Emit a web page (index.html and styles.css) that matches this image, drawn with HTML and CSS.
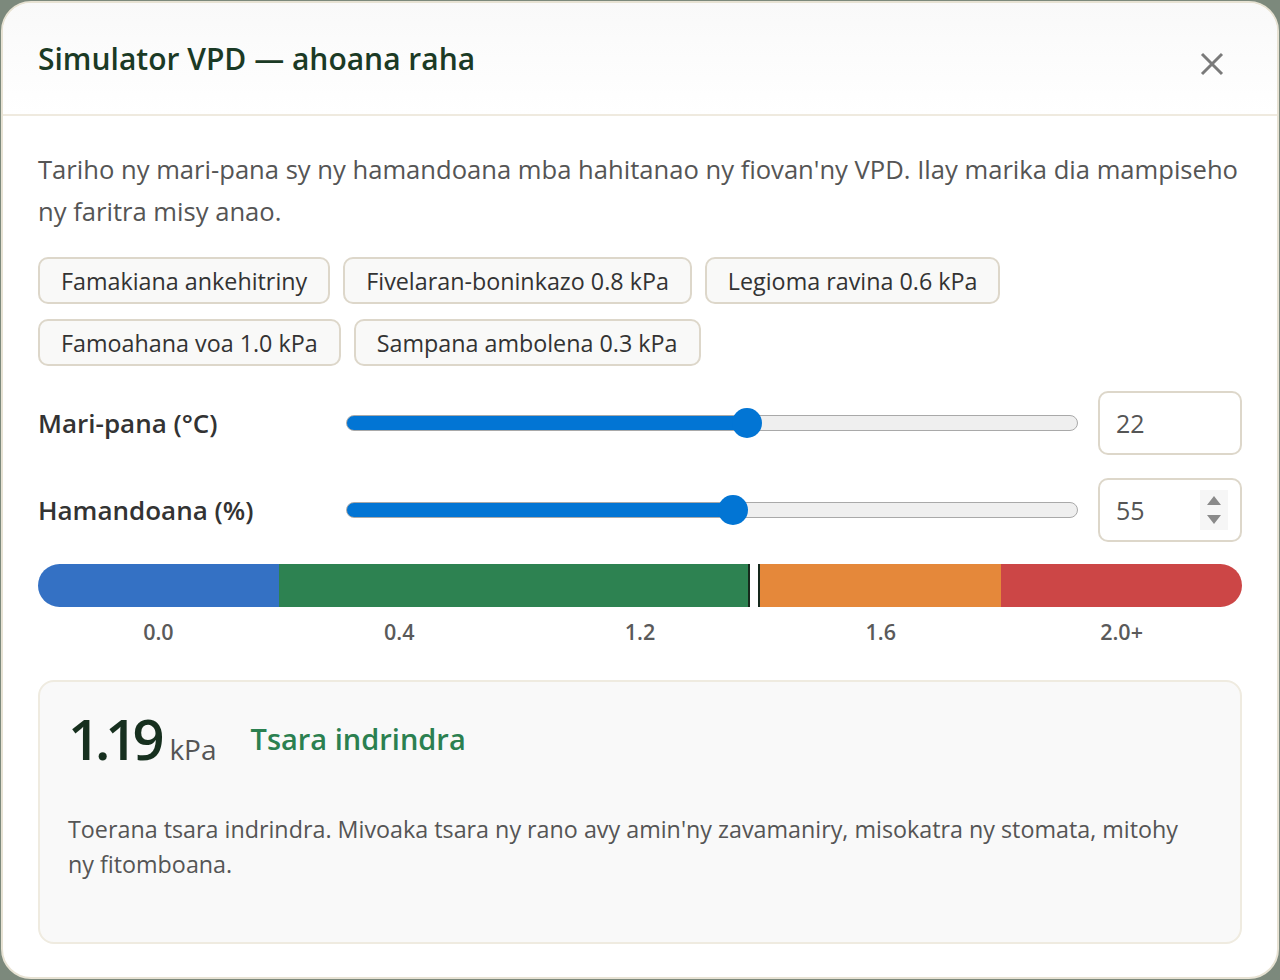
FILE: index.html
```html
<!DOCTYPE html>
<html lang="mg">
<head>
    <meta charset="UTF-8">
    <meta name="viewport" content="width=device-width, initial-scale=1.0">
    <title>Simulator VPD</title>
    <link rel="stylesheet" href="styles.css">
</head>
<body>
    <div class="modal">
        <header class="modal-header">
            <h1>Simulator VPD — ahoana raha</h1>
            <button class="close" aria-label="Hidio">
                <svg width="26" height="26" viewBox="0 0 26 26"><path d="M3 3 L23 23 M23 3 L3 23" stroke="#7a7a7a" stroke-width="3" fill="none"/></svg>
            </button>
        </header>
        <div class="modal-body">
            <p class="intro">Tariho ny mari-pana sy ny hamandoana mba hahitanao ny fiovan'ny VPD. Ilay marika dia mampiseho ny faritra misy anao.</p>

            <div class="chips">
                <button class="chip">Famakiana ankehitriny</button>
                <button class="chip">Fivelaran-boninkazo 0.8 kPa</button>
                <button class="chip">Legioma ravina 0.6 kPa</button>
                <button class="chip">Famoahana voa 1.0 kPa</button>
                <button class="chip">Sampana ambolena 0.3 kPa</button>
            </div>

            <div class="control">
                <label for="temp">Mari-pana (°C)</label>
                <input type="range" id="temp" class="slider" min="0" max="40" value="22" style="--fill: 55%">
                <div class="num-wrap">
                    <input type="number" class="num" value="22">
                </div>
            </div>
            <div class="control">
                <label for="hum">Hamandoana (%)</label>
                <input type="range" id="hum" class="slider" min="10" max="95" value="55" style="--fill: 52.9%">
                <div class="num-wrap">
                    <input type="number" class="num" value="55">
                    <span class="spin">
                        <svg width="16" height="40" viewBox="0 0 16 40"><path d="M8 6 L15 15 L1 15 Z M1 25 L15 25 L8 34 Z" fill="#8a8a8a"/></svg>
                    </span>
                </div>
            </div>

            <div class="scale">
                <div class="seg seg-low"></div>
                <div class="seg seg-good"></div>
                <div class="seg seg-high"></div>
                <div class="seg seg-danger"></div>
                <span class="marker" style="left: 59.5%"></span>
            </div>
            <div class="scale-labels">
                <span>0.0</span>
                <span>0.4</span>
                <span>1.2</span>
                <span>1.6</span>
                <span>2.0+</span>
            </div>

            <div class="result">
                <div class="result-head">
                    <span class="reading"><span class="value">1.19</span><span class="unit">kPa</span></span>
                    <span class="status">Tsara indrindra</span>
                </div>
                <p class="desc">Toerana tsara indrindra. Mivoaka tsara ny rano avy amin'ny zavamaniry, misokatra ny stomata, mitohy ny fitomboana.</p>
            </div>
        </div>
    </div>
</body>
</html>
```

FILE: styles.css
```css
* {
    box-sizing: border-box;
}
body {
    margin: 0;
    padding: 1px;
    height: 980px;
    background: #7c897c;
    font-family: "Open Sans", sans-serif;
    overflow: hidden;
}
.modal {
    height: 978px;
    background: #fff;
    border: 2px solid #e7e2d3;
    border-radius: 30px;
    overflow: hidden;
}
.modal-header {
    height: 113px;
    display: flex;
    align-items: center;
    justify-content: space-between;
    padding: 0 52px 0 35px;
    border-bottom: 2px solid #efeadf;
    background: linear-gradient(#f9f9f9, #fff);
}
.modal-header h1 {
    margin: 0;
    margin-top: -1px;
    font-size: 30px;
    font-weight: 600;
    color: #1b3a25;
}
.close {
    border: none;
    background: none;
    padding: 0;
    margin-top: 10px;
    cursor: pointer;
    display: flex;
}
.modal-body {
    padding: 33px 35px 0 35px;
}
.intro {
    margin: 0;
    font-size: 25.6px;
    line-height: 42px;
    color: #555;
}
.chips {
    display: flex;
    flex-wrap: wrap;
    gap: 15px 13px;
    margin-top: 24px;
}
.chip {
    height: 47px;
    padding: 0 21px;
    border: 2px solid #ddd7ca;
    border-radius: 10px;
    background: #f9f9f8;
    font-family: "Open Sans", sans-serif;
    font-size: 23.3px;
    color: #333;
}
.control {
    display: flex;
    align-items: center;
    margin-top: 25px;
}
.control + .control {
    margin-top: 23px;
}
.control label {
    width: 308px;
    font-size: 26px;
    font-weight: 600;
    color: #333;
}
.slider {
    -webkit-appearance: none;
    appearance: none;
    flex: 1;
    height: 30px;
    margin: 0 20px 0 0;
    background: transparent;
}
.slider::-webkit-slider-runnable-track {
    height: 16px;
    border-radius: 8px;
    border: 1px solid #a9a9a9;
    background: linear-gradient(to right, #0275d4 var(--fill), #efefef var(--fill));
}
.slider::-webkit-slider-thumb {
    -webkit-appearance: none;
    width: 30px;
    height: 30px;
    margin-top: -8px;
    border-radius: 50%;
    background: #0275d4;
    border: none;
}
.num-wrap {
    position: relative;
    width: 144px;
}
.num {
    width: 100%;
    height: 64px;
    padding: 0 16px;
    border: 2px solid #ddd7ca;
    border-radius: 10px;
    font-family: "Open Sans", sans-serif;
    font-size: 25px;
    color: #555;
    background: #fff;
    -moz-appearance: textfield;
}
.num::-webkit-inner-spin-button,
.num::-webkit-outer-spin-button {
    -webkit-appearance: none;
    margin: 0;
}
.spin {
    position: absolute;
    right: 14px;
    top: 12px;
    width: 28px;
    height: 40px;
    background: #f6f6f6;
    display: flex;
    justify-content: center;
}
.scale {
    position: relative;
    display: flex;
    height: 43px;
    margin-top: 22px;
    border-radius: 22px;
    overflow: hidden;
}
.seg {
    height: 100%;
}
.seg-low {
    width: 20%;
    background: #3471c4;
}
.seg-good {
    width: 40%;
    background: #2d8251;
}
.seg-high {
    width: 20%;
    background: #e5883a;
}
.seg-danger {
    width: 20%;
    background: #cc4646;
}
.marker {
    position: absolute;
    top: 0;
    bottom: 0;
    width: 12px;
    transform: translateX(-50%);
    background: #fff;
    border-left: 2px solid #16291c;
    border-right: 2px solid #16291c;
}
.scale-labels {
    display: flex;
    margin-top: 10px;
}
.scale-labels span {
    flex: 1;
    text-align: center;
    font-size: 21.5px;
    font-weight: 600;
    color: #5a5a5a;
}
.result {
    margin-top: 34px;
    height: 264px;
    padding: 18px 40px 18px 28px;
    border: 2px solid #efebe0;
    border-radius: 16px;
    background: #f9f9f9;
}
.result-head {
    display: flex;
    align-items: center;
}
.value {
    font-size: 56px;
    font-weight: 600;
    color: #17301f;
    letter-spacing: -5px;
}
.unit {
    margin-left: 10px;
    font-size: 28px;
    color: #555;
}
.status {
    margin-left: 34px;
    font-size: 29px;
    font-weight: 600;
    color: #2b8050;
}
.desc {
    margin: 36px 0 0 0;
    font-size: 23.3px;
    line-height: 35px;
    color: #555;
}
```
